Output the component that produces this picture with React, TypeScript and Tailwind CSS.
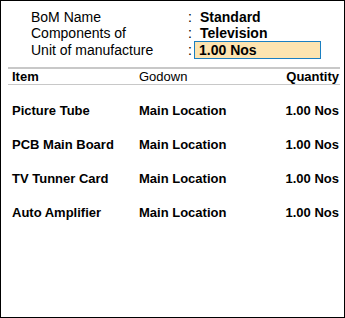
export default function App() {
  const rows = [
    ["Picture Tube", "Main Location", "1.00 Nos"],
    ["PCB Main Board", "Main Location", "1.00 Nos"],
    ["TV Tunner Card", "Main Location", "1.00 Nos"],
    ["Auto Amplifier", "Main Location", "1.00 Nos"],
  ];
  return (
    <div
      className="w-[345px] h-[318px] border border-black bg-white text-black overflow-hidden"
      style={{ fontFamily: '"Liberation Sans", Arial, sans-serif' }}
    >
      <div className="pt-[8px] pl-[30px] text-[14px] leading-[16px]">
        <div className="flex h-[16px] items-center">
          <div className="w-[157px]">BoM Name</div>
          <div className="w-[7px]">:</div>
          <div className="pl-[5px] font-bold">Standard</div>
        </div>
        <div className="flex h-[16px] items-center">
          <div className="w-[157px]">Components of</div>
          <div className="w-[7px]">:</div>
          <div className="pl-[5px] font-bold">Television</div>
        </div>
        <div className="flex h-[18px] items-center">
          <div className="w-[157px]">Unit of manufacture</div>
          <div className="w-[6px]">:</div>
          <div className="w-[127px] h-[18px] border border-[#1b7fc1] bg-[#fde4b0] pl-[4px] font-bold flex items-center">
            1.00 Nos
          </div>
        </div>
      </div>
      <div className="ml-[7px] mr-[4px] mt-[8px] border-t-2 border-[#c8c8c8]">
        <div className="grid grid-cols-[127px_1fr_auto] h-[16px] items-center pl-[4px] pr-[1px] text-[13px] leading-[15px] border-b border-[#c8c8c8]">
          <div className="font-bold">Item</div>
          <div>Godown</div>
          <div className="font-bold text-right">Quantity</div>
        </div>
        <div className="pt-[8px] pl-[4px] pr-[1px] text-[13px] leading-[15px] font-bold">
          {rows.map((r) => (
            <div key={r[0]} className="grid grid-cols-[127px_1fr_auto] h-[34px] items-center">
              <div>{r[0]}</div>
              <div>{r[1]}</div>
              <div className="text-right">{r[2]}</div>
            </div>
          ))}
        </div>
      </div>
    </div>
  );
}
